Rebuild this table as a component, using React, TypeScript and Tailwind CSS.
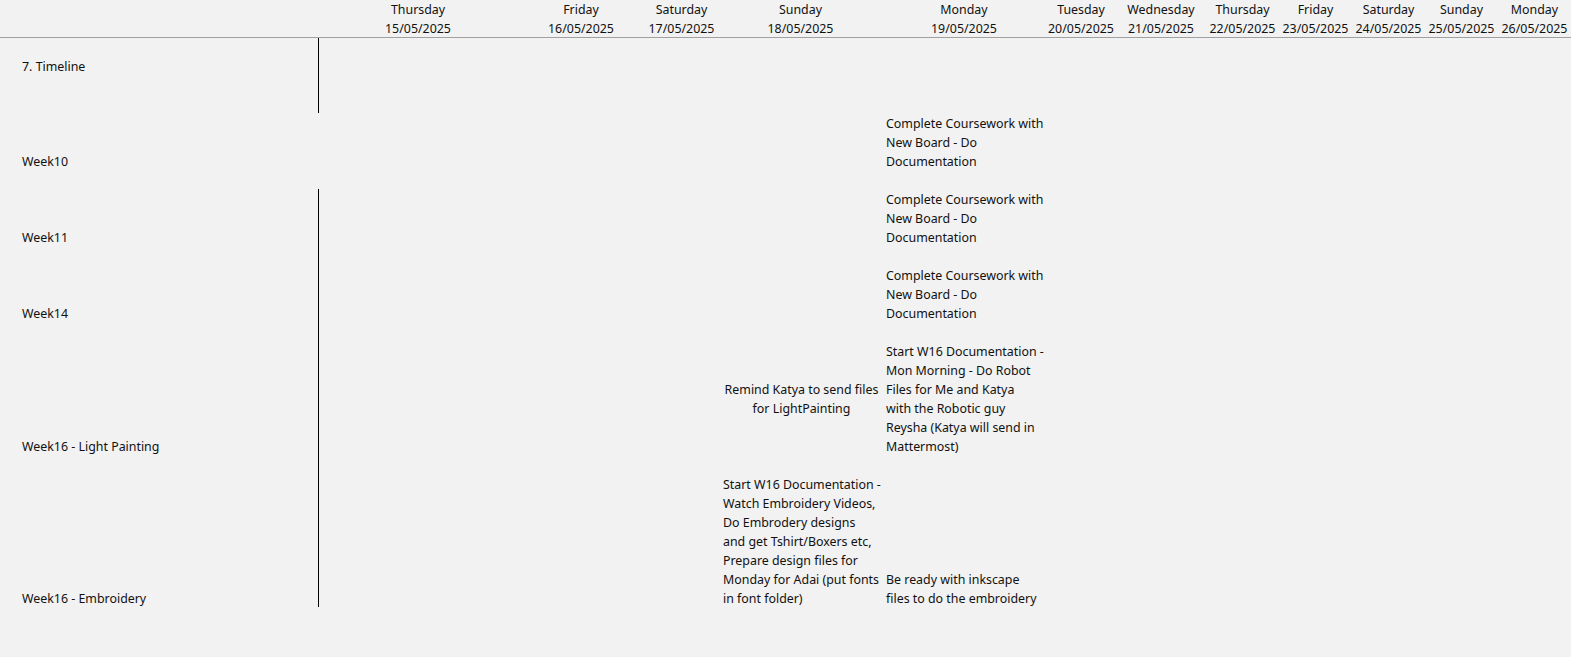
import type { ReactNode } from 'react'

const days = [
  ['Thursday', '15/05/2025'],
  ['Friday', '16/05/2025'],
  ['Saturday', '17/05/2025'],
  ['Sunday', '18/05/2025'],
  ['Monday', '19/05/2025'],
  ['Tuesday', '20/05/2025'],
  ['Wednesday', '21/05/2025'],
  ['Thursday', '22/05/2025'],
  ['Friday', '23/05/2025'],
  ['Saturday', '24/05/2025'],
  ['Sunday', '25/05/2025'],
  ['Monday', '26/05/2025'],
]

const coursework = ['Complete Coursework with', 'New Board - Do', 'Documentation']

function Lines({ lines }: { lines: string[] }) {
  return (
    <>
      {lines.map((l, i) => (
        <div key={i} className="whitespace-nowrap">{l}</div>
      ))}
    </>
  )
}

type RowProps = {
  label: string
  line: boolean
  height: string
  pad: string
  sunday?: ReactNode
  monday?: ReactNode
}

function Row({ label, line, height, pad, sunday, monday }: RowProps) {
  return (
    <div className={`flex ${height}`}>
      <div className={`w-[318px] shrink-0 pl-[22px] pt-px flex items-end ${pad}`}>
        <div className="whitespace-nowrap -mb-px">{label}</div>
      </div>
      <div className={`flex-1 border-l ${line ? 'border-black' : 'border-transparent'} ${pad}`}>
        <div className="grid h-full pt-px grid-cols-[199px_126px_75px_163px_164px_70px_90px_73px_73px_73px_73px_73px]">
          <div />
          <div />
          <div />
          <div className="h-full pl-[4px]">{sunday}</div>
          <div className="h-full pl-[4px]">{monday}</div>
        </div>
      </div>
    </div>
  )
}

export default function App() {
  return (
    <div className="min-h-screen bg-[#f2f2f2] font-['Noto_Sans',sans-serif] text-[12.4px] leading-[19px] text-[#111]">
      <div className="flex h-[38px] border-b border-[#a0a0a0]">
        <div className="w-[318px] shrink-0" />
        <div className="grid flex-1 grid-cols-[200px_126px_75px_163px_164px_70px_90px_73px_73px_73px_73px_73px]">
          {days.map(([d, date], i) => (
            <div key={i} className="text-center whitespace-nowrap">
              <div>{d}</div>
              <div>{date}</div>
            </div>
          ))}
        </div>
      </div>

      <div className="flex h-[75px]">
        <div className="w-[318px] shrink-0 pl-[22px] pt-[19px]">7. Timeline</div>
        <div className="flex-1 border-l border-black" />
      </div>

      <Row label="Week10" line={false} height="h-[76px]" pad="pb-[19px]" monday={<Lines lines={coursework} />} />
      <Row label="Week11" line height="h-[76px]" pad="pb-[19px]" monday={<Lines lines={coursework} />} />
      <Row label="Week14" line height="h-[76px]" pad="pb-[19px]" monday={<Lines lines={coursework} />} />
      <Row
        label="Week16 - Light Painting"
        line
        height="h-[133px]"
        pad="pb-[19px]"
        sunday={
          <div className="flex h-full flex-col items-center justify-center pr-[2px] text-center">
            <Lines lines={['Remind Katya to send files', 'for LightPainting']} />
          </div>
        }
        monday={
          <Lines
            lines={[
              'Start W16 Documentation -',
              'Mon Morning - Do Robot',
              'Files for Me and Katya',
              'with the Robotic guy',
              'Reysha (Katya will send in',
              'Mattermost)',
            ]}
          />
        }
      />
      <Row
        label="Week16 - Embroidery"
        line
        height="h-[133px]"
        pad="pb-0"
        sunday={
          <Lines
            lines={[
              'Start W16 Documentation -',
              'Watch Embroidery Videos,',
              'Do Embrodery designs',
              'and get Tshirt/Boxers etc,',
              'Prepare design files for',
              'Monday for Adai (put fonts',
              'in font folder)',
            ]}
          />
        }
        monday={
          <div className="flex h-full flex-col justify-end">
            <Lines lines={['Be ready with inkscape', 'files to do the embroidery']} />
          </div>
        }
      />
    </div>
  )
}
